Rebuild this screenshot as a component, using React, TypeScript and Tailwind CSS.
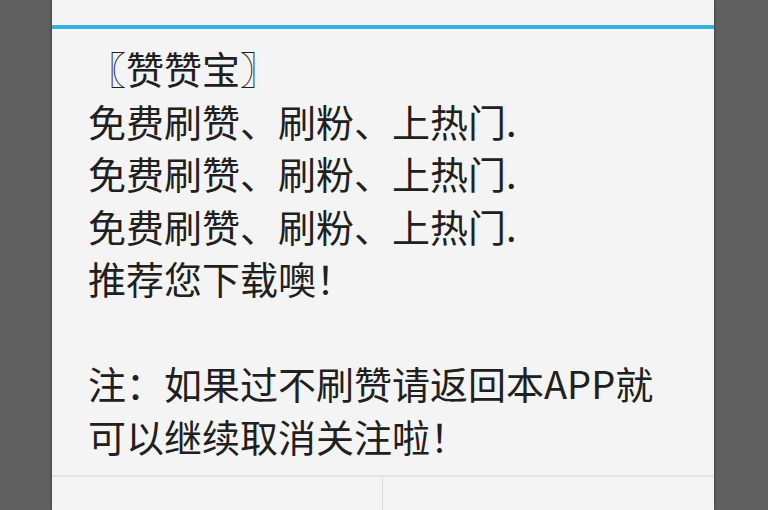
const lines = [
  "〖赞赞宝〗",
  "免费刷赞、刷粉、上热门.",
  "免费刷赞、刷粉、上热门.",
  "免费刷赞、刷粉、上热门.",
  "推荐您下载噢！",
  "",
  "注：如果过不刷赞请返回本APP就",
  "可以继续取消关注啦！",
];

export default function App() {
  return (
    <div className="h-[510px] w-[768px] overflow-hidden bg-[#606060]">
      <div className="ml-[52px] flex h-full w-[662px] flex-col bg-[#f4f4f4] shadow-[0_0_3px_rgba(0,0,0,0.5)]">
        {/* title area, cut off at the top */}
        <div className="h-[25px] shrink-0" />
        <div className="h-[4px] shrink-0 bg-[#33b1e1]" />

        {/* message */}
        <div
          className="shrink-0 pl-[36px] pt-[13px] pb-[13px] text-[38px] leading-[52.5px] text-[#202020]"
          style={{ fontFamily: '"Noto Sans CJK SC", "Noto Sans", sans-serif' }}
        >
          {lines.map((line, i) => (
            <div key={i} className="h-[52.5px] whitespace-nowrap">
              {line}
            </div>
          ))}
        </div>

        {/* buttons */}
        <div className="h-[2px] shrink-0 bg-[#e2e2e2]" />
        <div className="grid flex-1 grid-cols-2">
          <div className="border-r border-[#dcdcdc]" />
          <div />
        </div>
      </div>
    </div>
  );
}
